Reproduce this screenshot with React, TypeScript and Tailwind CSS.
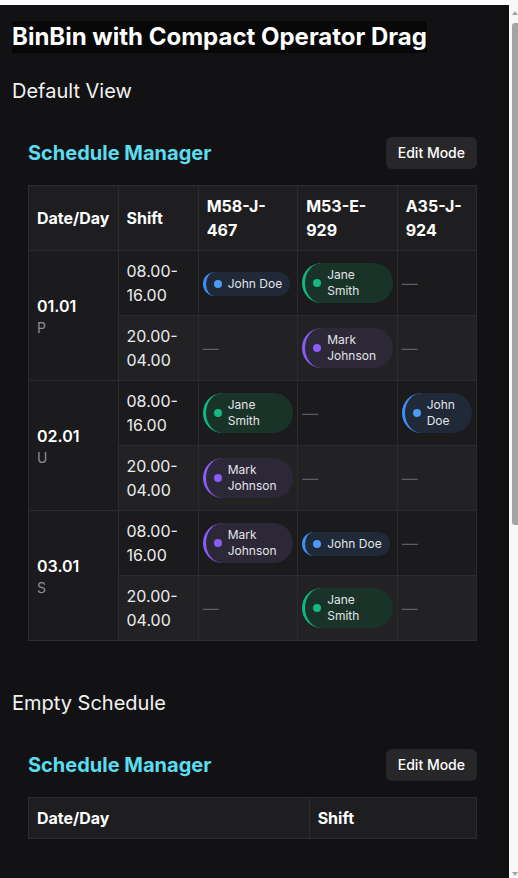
import React from 'react';

type Tone = 'blue' | 'green' | 'purple';

const PEOPLE: Record<string, Tone> = {
  'John Doe': 'blue',
  'Jane Smith': 'green',
  'Mark Johnson': 'purple',
};

const TONES: Record<Tone, { pill: string; dot: string }> = {
  blue: { pill: 'bg-[#1f2937] border-[#3f8ef5]', dot: 'bg-[#4d9bf8]' },
  green: { pill: 'bg-[#1a3329] border-[#10b981]', dot: 'bg-[#12b981]' },
  purple: { pill: 'bg-[#2c2838] border-[#8b5cf6]', dot: 'bg-[#8b5cf6]' },
};

const OPERATORS = ['M58-J-467', 'M53-E-929', 'A35-J-924'];
const SHIFTS = ['08.00-16.00', '20.00-04.00'];

const DAYS: { date: string; day: string; slots: (string | null)[][] }[] = [
  { date: '01.01', day: 'P', slots: [['John Doe', 'Jane Smith', null], [null, 'Mark Johnson', null]] },
  { date: '02.01', day: 'U', slots: [['Jane Smith', null, 'John Doe'], ['Mark Johnson', null, null]] },
  { date: '03.01', day: 'S', slots: [['Mark Johnson', 'John Doe', null], [null, 'Jane Smith', null]] },
];

const Pill = ({ name }: { name: string }) => {
  const tone = TONES[PEOPLE[name]];
  return (
    <span className={`inline-flex items-center gap-1.5 rounded-full border-l-[3px] py-1 pl-2 pr-2 text-xs leading-4 text-[#e4e4e7] ${tone.pill}`}>
      <span className={`h-2 w-2 shrink-0 rounded-full ${tone.dot}`} />
      <span>{name}</span>
    </span>
  );
};

const Empty = () => <span className="text-base leading-6 text-[#5c5c62]">—</span>;

const ScheduleManager = ({ empty }: { empty?: boolean }) => {
  const ops = empty ? [] : OPERATORS;
  return (
    <div className="p-4">
      <div className="mb-4 flex items-center justify-between">
        <h3 className="text-xl font-bold text-[#5bdcef]">Schedule Manager</h3>
        <button className="rounded-md bg-[#27272a] px-3 py-1.5 text-sm font-medium text-white">Edit Mode</button>
      </div>
      <table className="w-full border-collapse text-left">
        <thead>
          <tr className="bg-[#1e1e20]">
            <th className="border border-[#2c2c2f] p-2 font-bold text-white">Date/Day</th>
            <th className="border border-[#2c2c2f] p-2 font-bold text-white">Shift</th>
            {ops.map((op) => (
              <th key={op} className="border border-[#2c2c2f] p-2 font-bold text-white">{op}</th>
            ))}
          </tr>
        </thead>
        {!empty && (
          <tbody>
            {DAYS.map((d) =>
              SHIFTS.map((shift, i) => (
                <tr key={d.date + shift} className={i === 0 ? 'bg-[#1b1b1d]' : 'bg-[#222224]'}>
                  {i === 0 && (
                    <td rowSpan={2} className="border border-[#2c2c2f] bg-[#1b1b1d] p-2 align-middle">
                      <div className="font-semibold leading-6 text-white">{d.date}</div>
                      <div className="text-sm text-[#8c8c94]">{d.day}</div>
                    </td>
                  )}
                  <td className="border border-[#2c2c2f] p-2 text-[#ececec]">{shift}</td>
                  {d.slots[i].map((name, j) => (
                    <td key={j} className="border border-[#2c2c2f] px-1 py-1 align-middle">
                      {name ? <Pill name={name} /> : <Empty />}
                    </td>
                  ))}
                </tr>
              ))
            )}
          </tbody>
        )}
      </table>
    </div>
  );
};

export default function App() {
  return (
    <div className="flex h-[878px] overflow-hidden bg-white pt-[5px] font-['Inter',sans-serif]">
      <div className="min-w-0 flex-1 overflow-hidden bg-[#121214] pl-3 pr-4 pt-4 text-white">
        <h1 className="inline-block bg-[#080808] text-2xl font-bold text-white">BinBin with Compact Operator Drag</h1>
        <h2 className="mt-6 text-xl text-[#f2f2f2]">Default View</h2>
        <div className="mt-4">
          <ScheduleManager />
        </div>
        <h2 className="mt-8 text-xl text-[#f2f2f2]">Empty Schedule</h2>
        <div className="mt-4">
          <ScheduleManager empty />
        </div>
      </div>
      {/* scrollbar */}
      <div className="relative -mt-[5px] w-[9px] shrink-0 bg-[#f8f8f8]">
        <div className="absolute left-[3px] top-[11px] h-0 w-0 border-x-[3px] border-b-[4px] border-x-transparent border-b-[#a3a3a3]" />
        <div className="absolute left-[3px] top-[23px] h-[502px] w-[8px] rounded-[3px] bg-[#a3a3a3]" />
        <div className="absolute bottom-[2px] left-[3px] h-0 w-0 border-x-[3px] border-t-[4px] border-x-transparent border-t-[#a3a3a3]" />
      </div>
    </div>
  );
}
